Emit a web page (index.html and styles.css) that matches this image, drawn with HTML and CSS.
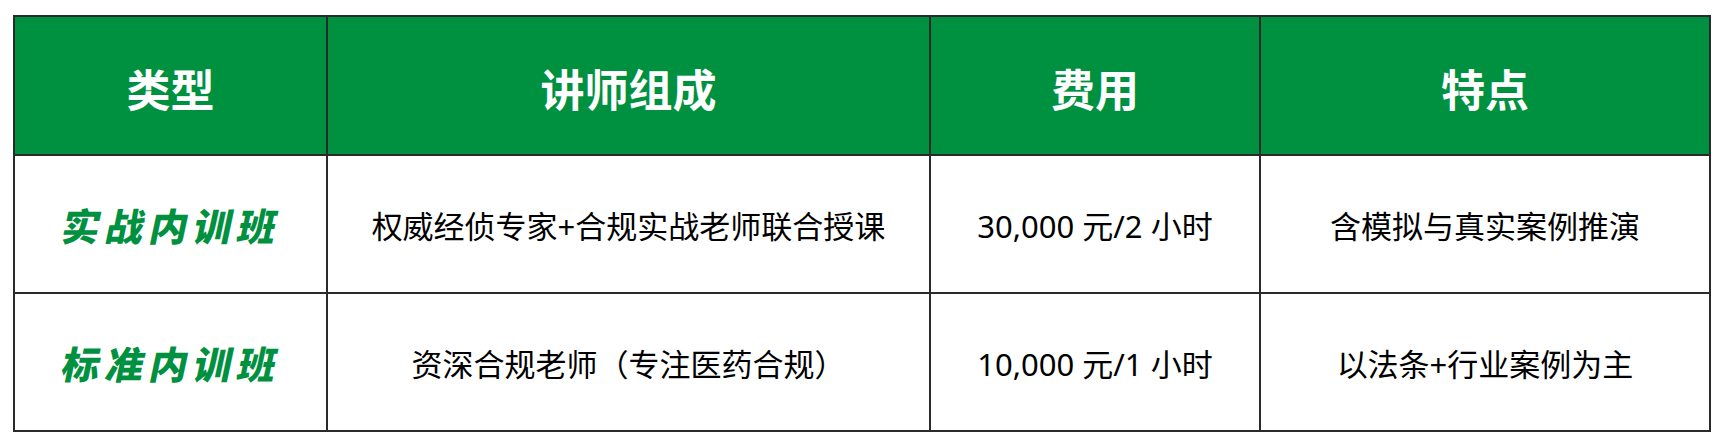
FILE: index.html
```html
<!DOCTYPE html>
<html lang="zh-CN">
<head>
<meta charset="utf-8">
<title>内训班类型</title>
<link rel="stylesheet" href="styles.css">
</head>
<body>
<div class="sheet">
  <div class="grid" role="table">
    <div class="cell head" role="columnheader">类型</div>
    <div class="cell head" role="columnheader">讲师组成</div>
    <div class="cell head" role="columnheader">费用</div>
    <div class="cell head" role="columnheader">特点</div>

    <div class="cell" role="cell"><span class="label">实战内训班</span></div>
    <div class="cell body" role="cell">权威经侦专家+合规实战老师联合授课</div>
    <div class="cell body" role="cell">30,000 元/2 小时</div>
    <div class="cell body" role="cell">含模拟与真实案例推演</div>

    <div class="cell" role="cell"><span class="label">标准内训班</span></div>
    <div class="cell body" role="cell">资深合规老师（专注医药合规）</div>
    <div class="cell body" role="cell">10,000 元/1 小时</div>
    <div class="cell body" role="cell">以法条+行业案例为主</div>
  </div>
</div>
</body>
</html>
```
FILE: styles.css
```css
html, body {
  margin: 0;
  padding: 0;
  background: #ffffff;
}

.sheet {
  padding: 15px 0 0 13px;
}

.grid {
  display: grid;
  grid-template-columns: 313px 603px 330px 450px;
  grid-template-rows: 139px 138px 138px;
  width: max-content;
  border-top: 2px solid #2a2a2a;
  border-left: 2px solid #2a2a2a;
}

.cell {
  display: flex;
  align-items: center;
  justify-content: center;
  border-right: 2px solid #2a2a2a;
  border-bottom: 2px solid #2a2a2a;
  font-family: "Noto Sans CJK SC", "Noto Sans", sans-serif;
  color: #000;
}

.head {
  background: #009140;
  color: #ffffff;
  font-size: 44px;
  font-weight: 700;
  padding-top: 4px;
}

.body {
  font-family: "Noto Sans", "Noto Sans CJK SC", sans-serif;
  font-size: 31px;
  font-weight: 400;
}

.label {
  display: inline-block;
  color: #009140;
  font-size: 38px;
  font-weight: 900;
  letter-spacing: 6px;
  margin-right: -6px;
  transform: skewX(-12deg);
}
```
